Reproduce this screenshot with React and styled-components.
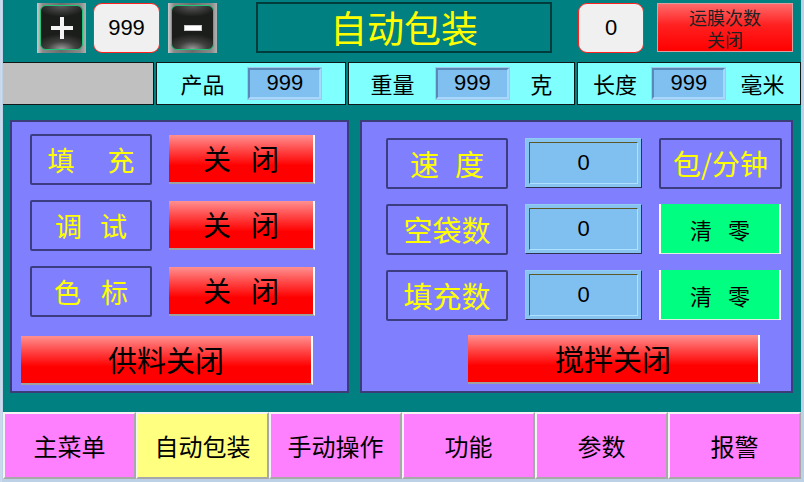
import React from "react";
import styled, { createGlobalStyle } from "styled-components";

const Global = createGlobalStyle`
  html, body { margin: 0; padding: 0; background: #bcd0e6; }
  * { box-sizing: border-box; }
`;

const CJK = `"Noto Sans CJK SC", "Noto Sans", sans-serif`;
const NUM = `"Liberation Sans", Arial, sans-serif`;

const Frame = styled.div`
  width: 804px;
  height: 482px;
  padding: 0 3px 3px 3px;
  background: linear-gradient(90deg, #b4c8e0 0, #dce8f4 1px, #bcd0e6 2px);
  overflow: hidden;
`;

const Screen = styled.div`
  width: 100%;
  height: 100%;
  background: #008080;
  display: flex;
  flex-direction: column;
  font-family: ${CJK};
`;

const TopBar = styled.div`
  height: 62px;
  display: flex;
  align-items: flex-start;
  padding-top: 3px;
`;

const Slot = styled.div`
  margin-left: ${(p) => p.$ml}px;
  margin-top: ${(p) => p.$mt || 0}px;
  display: flex;
`;

const IconButton = styled.div`
  width: 49px;
  height: 50px;
  background: linear-gradient(90deg, #c8c8c8 0%, #8a8a8a 12%, #6c6c6c 50%, #8a8a8a 88%, #b0b0b0 100%);
  padding: 2px 3px 3px 3px;
  display: flex;
`;

const IconFace = styled.div`
  flex: 1;
  border-radius: 6px;
  border: 1.5px solid #1fc67a;
  background:
    radial-gradient(ellipse 70% 35% at 50% 100%, #9a9a9a 0%, rgba(120,120,120,0.4) 50%, rgba(0,0,0,0) 100%),
    radial-gradient(ellipse 60% 25% at 50% 0%, #5a5a5a 0%, rgba(0,0,0,0) 100%),
    #1b1d1a;
  display: flex;
  align-items: center;
  justify-content: center;
`;

const CountBox = styled.div`
  width: ${(p) => p.$w}px;
  height: 50px;
  background: #f0f0f0;
  border: 1.5px solid #ff2020;
  border-radius: 9px;
  display: flex;
  align-items: center;
  justify-content: center;
  font-family: ${NUM};
  font-size: 22px;
  color: #000;
`;

const TitleBox = styled.div`
  width: 296px;
  height: 51px;
  border: 2px solid #003c3c;
  display: flex;
  align-items: center;
  justify-content: center;
  color: #ffff00;
  font-size: 37px;
  line-height: 1;
`;

const RedTopButton = styled.div`
  width: 136px;
  height: 49px;
  background: linear-gradient(180deg, #ff6a6a 0%, #ff2020 45%, #ff0000 100%);
  border: 1px solid #d8a0a0;
  display: flex;
  align-items: center;
  justify-content: center;
  text-align: center;
  color: #202020;
  font-size: 18px;
  line-height: 22px;
`;

const InfoRow = styled.div`
  height: 43px;
  display: flex;
  gap: 2px;
`;

const InfoCell = styled.div`
  width: ${(p) => p.$w}px;
  height: 100%;
  background: ${(p) => (p.$grey ? "#c0c0c0" : "#80ffff")};
  border: 1px solid #101818;
  border-left: ${(p) => (p.$grey ? "none" : "1px solid #101818")};
  display: flex;
  align-items: center;
  justify-content: space-evenly;
  font-size: 22px;
  color: #000;
`;

const SmallInput = styled.div`
  width: 73px;
  height: 31px;
  background: #80c0f0;
  border: 2px solid;
  border-color: #5a88b8 #a8d8ff #a8d8ff #5a88b8;
  box-shadow: 0 0 0 1px #9ec8e8;
  display: flex;
  align-items: center;
  justify-content: center;
  font-family: ${NUM};
  font-size: 22px;
  color: #000;
`;

const Panels = styled.div`
  display: flex;
  gap: 11px;
  margin-top: 15px;
  margin-left: 7px;
  height: 274px;
`;

const Panel = styled.div`
  width: ${(p) => p.$w}px;
  height: 100%;
  background: #8080ff;
  border: 2px solid #3c3c78;
  padding: ${(p) => p.$pt}px 0 0 ${(p) => p.$pl}px;
  display: flex;
  flex-direction: column;
`;

const Rows = styled.div`
  display: flex;
  flex-direction: column;
  gap: 15px;
`;

const Row = styled.div`
  display: flex;
  align-items: center;
  gap: 17px;
`;

const Label = styled.div`
  width: ${(p) => p.$w || 122}px;
  height: 51px;
  border: 2px solid #3c3c80;
  border-radius: 2px;
  display: flex;
  align-items: center;
  justify-content: center;
  color: #ffff00;
  font-size: ${(p) => p.$fs || 27}px;
  letter-spacing: ${(p) => p.$ls || 0}px;
  padding-left: ${(p) => p.$ls || 0}px;
  white-space: nowrap;
`;

const RedButton = styled.div`
  width: ${(p) => p.$w}px;
  height: 49px;
  background: linear-gradient(180deg, #ff9090 0%, #ff4040 35%, #ff0000 65%, #ff0000 100%);
  border-right: 2px solid #ffffff;
  border-bottom: 2px solid #a0a0a0;
  display: flex;
  align-items: center;
  justify-content: center;
  color: #000;
  font-size: ${(p) => p.$fs || 28}px;
  letter-spacing: ${(p) => p.$ls || 0}px;
  padding-left: ${(p) => p.$ls || 0}px;
  margin-top: ${(p) => p.$mt || 0}px;
  margin-left: ${(p) => p.$ml || 0}px;
  white-space: nowrap;
`;

const ValueOuter = styled.div`
  width: 117px;
  height: 50px;
  background: #88c4f0;
  border: 1px solid;
  border-color: #90ccf4 #303050 #303050 #90ccf4;
  padding: 3px;
  display: flex;
`;

const ValueInner = styled.div`
  flex: 1;
  background: #80c0f0;
  border: 1px solid;
  border-color: #5c5828 #b0e0ff #b0e0ff #5c5828;
  display: flex;
  align-items: center;
  justify-content: center;
  font-family: ${NUM};
  font-size: 22px;
  color: #000;
`;

const GreenButton = styled.div`
  width: 122px;
  height: 50px;
  background: #00ff80;
  border-left: 2px solid #ffffff;
  border-right: 2px solid #ffffff;
  border-bottom: 1px solid #e0f0e0;
  display: flex;
  align-items: center;
  justify-content: center;
  font-size: 22px;
  color: #000;
  letter-spacing: 16px;
  padding-left: 16px;
`;

const Nav = styled.div`
  margin-top: 19px;
  display: grid;
  grid-template-columns: repeat(6, 1fr);
  height: 67px;
`;

const Tab = styled.div`
  background: ${(p) => (p.$active ? "#ffff80" : "#ff80ff")};
  border: 2px solid;
  border-color: #f4f4f4 #a8a8a8 #a8a8a8 #f4f4f4;
  display: flex;
  align-items: center;
  justify-content: center;
  font-size: 24px;
  color: #000;
`;

const PlusIcon = () => (
  <svg width="24" height="24" viewBox="0 0 24 24">
    <rect x="10" y="1" width="4" height="22" fill="#f4f4f4" />
    <rect x="1" y="10" width="22" height="4" fill="#f4f4f4" />
  </svg>
);

const MinusIcon = () => (
  <svg width="18" height="6" viewBox="0 0 18 6">
    <rect x="0.5" y="0.5" width="17" height="5" fill="#ffffff" stroke="#c8c8c8" strokeWidth="1" />
  </svg>
);

const leftRows = [
  { label: "填充", ls: 33 },
  { label: "调试", ls: 18 },
  { label: "色标", ls: 20 },
];

const rightRows = [
  { label: "速度", ls: 16, unit: "包/分钟" },
  { label: "空袋数", ls: 0, clear: true },
  { label: "填充数", ls: 0, clear: true },
];

const tabs = ["主菜单", "自动包装", "手动操作", "功能", "参数", "报警"];

export default function App() {
  return (
    <>
      <Global />
      <Frame>
        <Screen>
          <TopBar>
            <Slot $ml={34}>
              <IconButton>
                <IconFace>
                  <PlusIcon />
                </IconFace>
              </IconButton>
            </Slot>
            <Slot $ml={7}>
              <CountBox $w={67}>999</CountBox>
            </Slot>
            <Slot $ml={8}>
              <IconButton>
                <IconFace>
                  <MinusIcon />
                </IconFace>
              </IconButton>
            </Slot>
            <Slot $ml={39} $mt={-1}>
              <TitleBox>自动包装</TitleBox>
            </Slot>
            <Slot $ml={26}>
              <CountBox $w={66}>0</CountBox>
            </Slot>
            <Slot $ml={13}>
              <RedTopButton>
                <span>
                  运膜次数
                  <br />
                  关闭
                </span>
              </RedTopButton>
            </Slot>
          </TopBar>

          <InfoRow>
            <InfoCell $grey $w={151} />
            <InfoCell $w={191}>
              <span>产品</span>
              <SmallInput>999</SmallInput>
            </InfoCell>
            <InfoCell $w={227}>
              <span>重量</span>
              <SmallInput>999</SmallInput>
              <span>克</span>
            </InfoCell>
            <InfoCell $w={225}>
              <span>长度</span>
              <SmallInput>999</SmallInput>
              <span>毫米</span>
            </InfoCell>
          </InfoRow>

          <Panels>
            <Panel $w={339} $pt={12} $pl={18}>
              <Rows>
                {leftRows.map((r) => (
                  <Row key={r.label}>
                    <Label $ls={r.ls}>{r.label}</Label>
                    <RedButton $w={146} $ls={20}>关闭</RedButton>
                  </Row>
                ))}
              </Rows>
              <RedButton $w={292} $mt={19} $ml={-9} $fs={29}>供料关闭</RedButton>
            </Panel>

            <Panel $w={433} $pt={16} $pl={24}>
              <Rows>
                {rightRows.map((r) => (
                  <Row key={r.label}>
                    <Label $w={122} $ls={r.ls} $fs={29}>{r.label}</Label>
                    <ValueOuter>
                      <ValueInner>0</ValueInner>
                    </ValueOuter>
                    {r.unit ? (
                      <Label $w={123} $fs={28}>{r.unit}</Label>
                    ) : (
                      <GreenButton>清零</GreenButton>
                    )}
                  </Row>
                ))}
              </Rows>
              <RedButton $w={292} $mt={14} $ml={82} $fs={29}>搅拌关闭</RedButton>
            </Panel>
          </Panels>

          <Nav>
            {tabs.map((t) => (
              <Tab key={t} $active={t === "自动包装"}>{t}</Tab>
            ))}
          </Nav>
        </Screen>
      </Frame>
    </>
  );
}
